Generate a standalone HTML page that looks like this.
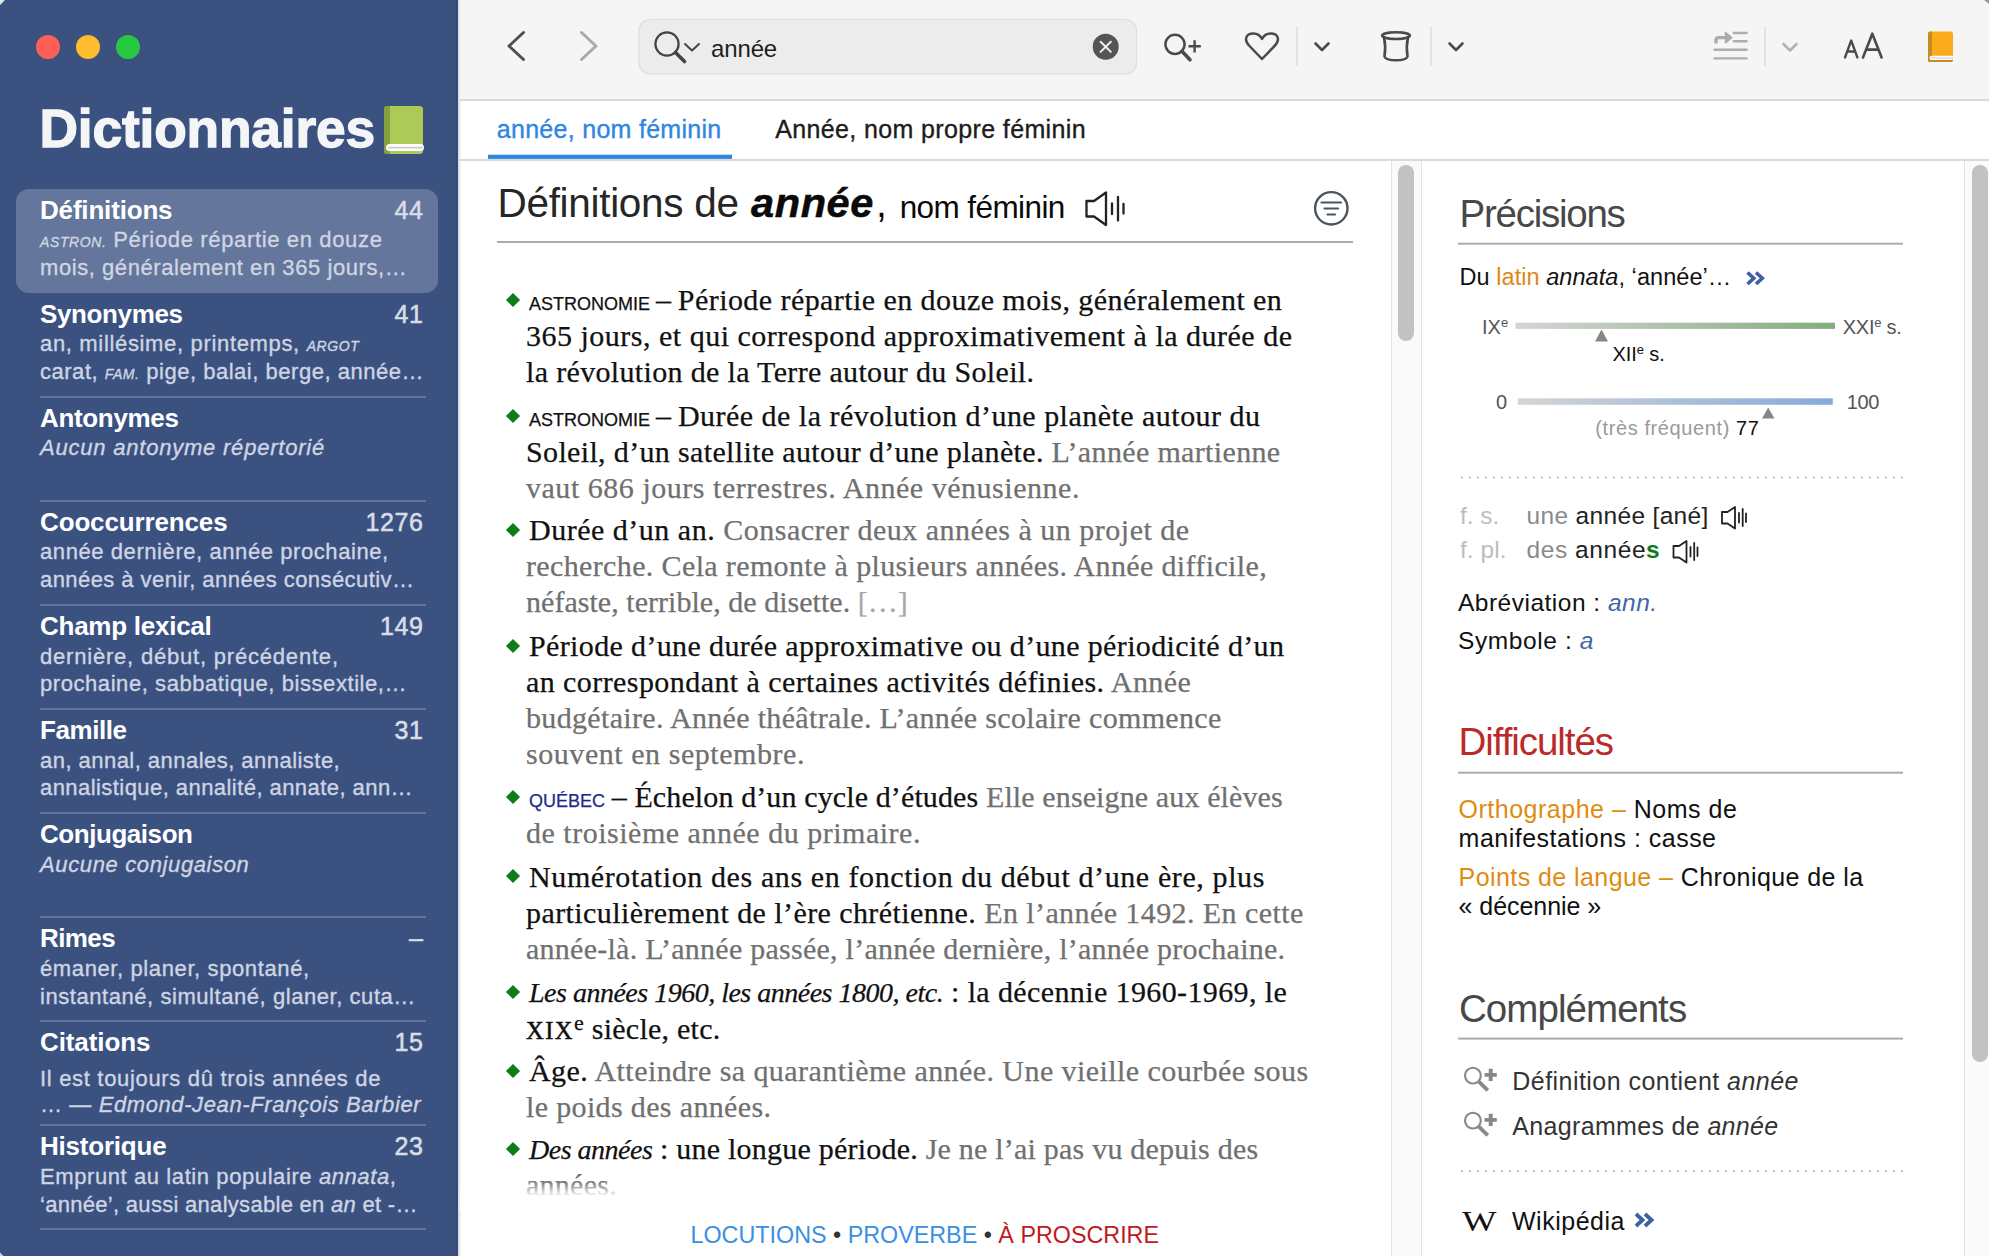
<!DOCTYPE html>
<html><head><meta charset="utf-8">
<style>
*{margin:0;padding:0;box-sizing:border-box}
html,body{width:1989px;height:1256px;overflow:hidden;background:#fff;font-family:"Liberation Sans",sans-serif;position:relative}
.abs{position:absolute}
.r{position:absolute;white-space:nowrap}
svg{position:absolute;overflow:visible}
.sc{font-style:italic;font-size:14px;letter-spacing:0.6px}
.g{color:#707070}
.lg{color:#a8a8a8}
.dom{font-family:"Liberation Sans",sans-serif;font-size:18px;line-height:0;letter-spacing:0!important}
.qc{color:#1f2a8a}
.rom{font-size:24.5px;letter-spacing:1.5px;line-height:0;-webkit-text-stroke:0.5px currentColor}
sup{font-size:22px;line-height:0;vertical-align:9px}
.dia{position:absolute;width:10px;height:10px;background:#0d7d17;transform:rotate(45deg)}
.med{-webkit-text-stroke:0.35px currentColor}
.it{font-size:28px;letter-spacing:-0.5px!important}
</style></head><body>

<div class="abs" style="left:0;top:0;width:458px;height:1256px;background:#3b5281"></div>
<div class="abs" style="left:456px;top:0;width:2px;height:1256px;background:#374b7b"></div>
<div class="abs" style="left:458px;top:0;width:3px;height:1256px;background:linear-gradient(to right,#dcdcdc,#e9e9e9 60%,#f6f6f6)"></div>
<div class="abs" style="left:36px;top:35px;width:24px;height:24px;border-radius:50%;background:#fe5f57"></div>
<div class="abs" style="left:76px;top:35px;width:24px;height:24px;border-radius:50%;background:#febc2e"></div>
<div class="abs" style="left:116px;top:35px;width:24px;height:24px;border-radius:50%;background:#28c840"></div>
<div class="abs" style="left:16px;top:189px;width:422px;height:104px;border-radius:13px;background:#64769b"></div>
<div class="abs" style="left:40px;top:395.7px;width:386px;height:2px;background:#6074a0"></div>
<div class="abs" style="left:40px;top:499.7px;width:386px;height:2px;background:#6074a0"></div>
<div class="abs" style="left:40px;top:603.8px;width:386px;height:2px;background:#6074a0"></div>
<div class="abs" style="left:40px;top:707.9px;width:386px;height:2px;background:#6074a0"></div>
<div class="abs" style="left:40px;top:812.0px;width:386px;height:2px;background:#6074a0"></div>
<div class="abs" style="left:40px;top:916.1px;width:386px;height:2px;background:#6074a0"></div>
<div class="abs" style="left:40px;top:1020.1px;width:386px;height:2px;background:#6074a0"></div>
<div class="abs" style="left:40px;top:1124.2px;width:386px;height:2px;background:#6074a0"></div>
<div class="abs" style="left:40px;top:1228.3px;width:386px;height:2px;background:#6074a0"></div>

<svg style="left:0;top:0" width="460" height="200">
 <rect x="384" y="106" width="39" height="48" rx="3.5" fill="#adc957"/>
 <path d="M387.5,106 L390,106 L390,154 L387.5,154 A3.5,3.5 0 0 1 384,150.5 L384,109.5 A3.5,3.5 0 0 1 387.5,106 Z" fill="#84a03f"/>
 <rect x="386" y="144" width="38" height="7" rx="3.5" fill="#ffffff"/>
 <rect x="388" y="146.7" width="35" height="1.8" fill="#cdcdcd"/>
</svg>
<div class="abs" style="left:460px;top:0;width:1529px;height:100px;background:#f5f5f5"></div>
<div class="abs" style="left:460px;top:99px;width:1529px;height:1.5px;background:#d9d9d9"></div>
<div class="abs" style="left:460px;top:159px;width:1529px;height:1.6px;background:#dadada"></div>
<!-- content scrollbar -->
<div class="abs" style="left:1390.5px;top:161px;width:31px;height:1095px;background:#fafafa;border-left:1.5px solid #e3e3e3;border-right:1.5px solid #e3e3e3"></div>
<div class="abs" style="left:1398px;top:165px;width:16px;height:176px;border-radius:8px;background:#c2c2c2"></div>
<!-- right scrollbar -->
<div class="abs" style="left:1963.5px;top:161px;width:26px;height:1095px;background:#fafafa;border-left:1.5px solid #e3e3e3"></div>
<div class="abs" style="left:1972px;top:165px;width:16px;height:897px;border-radius:8px;background:#c2c2c2"></div>

<svg style="left:0;top:0" width="1989" height="1256" viewBox="0 0 1989 1256">
 <g fill="none" stroke-linecap="round" stroke-linejoin="round">
  <path d="M523.5,32.5 L509,46 L523.5,59.5" stroke="#4f4f4f" stroke-width="3"/>
  <path d="M581.5,32.5 L596,46 L581.5,59.5" stroke="#a9a9a9" stroke-width="3"/>
  <rect x="639" y="19.5" width="497.5" height="54.5" rx="11" fill="#ececec" stroke="#dedede" stroke-width="1.2"/>
  <circle cx="667" cy="44" r="11.6" stroke="#444" stroke-width="2.2"/>
  <path d="M675.5,52.5 L684.5,61.5" stroke="#444" stroke-width="3.6"/>
  <path d="M685,44 L692,50.5 L699,44" stroke="#444" stroke-width="2"/>
  <circle cx="1105.7" cy="46.8" r="13" fill="#555" stroke="none"/>
  <path d="M1100.6,41.7 L1110.8,51.9 M1110.8,41.7 L1100.6,51.9" stroke="#f0f0f0" stroke-width="2"/>
  <circle cx="1175" cy="44.3" r="9.6" stroke="#4a4a4a" stroke-width="2.5"/>
  <path d="M1182,51.3 L1190,59.8" stroke="#4a4a4a" stroke-width="3.6"/>
  <path d="M1188.5,46.3 L1200.8,46.3 M1194.6,40.2 L1194.6,52.4" stroke="#4a4a4a" stroke-width="2.4" stroke-linecap="butt"/>
  <path d="M1262,59 L1249.5,46 C1244,40.5 1245,33.5 1253.5,33.5 C1257.5,33.5 1260.5,36 1262,39 C1263.5,36 1266.5,33.5 1270.5,33.5 C1279,33.5 1280,40.5 1274.5,46 Z" stroke="#4a4a4a" stroke-width="2.5"/>
  <path d="M1297,27.5 L1297,65.5" stroke="#dadada" stroke-width="1.4"/>
  <path d="M1315.5,43.5 L1322,50 L1328.5,43.5" stroke="#4a4a4a" stroke-width="2.6"/>
  <ellipse cx="1396" cy="35.6" rx="13.8" ry="3.4" stroke="#4a4a4a" stroke-width="2.6"/>
  <path d="M1384,37 C1385.5,44 1385.5,50 1384.5,56.5 C1386,61.5 1406,61.5 1407.5,56.5 C1406.5,50 1406.5,44 1408,37" stroke="#4a4a4a" stroke-width="2.6"/>
  <path d="M1431,27.5 L1431,65.5" stroke="#dadada" stroke-width="1.4"/>
  <path d="M1449.5,43.5 L1456,50 L1462.5,43.5" stroke="#4a4a4a" stroke-width="2.6"/>
  <path d="M1733.8,33 L1746.6,33 M1733.8,41.3 L1746.6,41.3 M1714.5,49.8 L1746.6,49.8 M1714.5,58.4 L1746.6,58.4" stroke="#adadad" stroke-width="2.4"/>
  <path d="M1716,43.5 L1716,40 C1716,38.5 1717,37.6 1718.5,37.6 L1726,37.6" stroke="#adadad" stroke-width="3.4" stroke-linecap="butt"/>
  <path d="M1725.5,32.5 L1731.8,37.6 L1725.5,42.8 Z" fill="#adadad" stroke="#adadad" stroke-width="1.5"/>
  <path d="M1765,27.5 L1765,65.5" stroke="#dadada" stroke-width="1.4"/>
  <path d="M1783.5,44 L1790,50.5 L1796.5,44" stroke="#b3b3b3" stroke-width="2.6"/>
  <path d="M1845,57.5 L1851.2,40.5 L1857.4,57.5 M1847.3,51.5 L1855.1,51.5" stroke="#4a4a4a" stroke-width="2.3"/>
  <path d="M1863,57.5 L1872.3,33.7 L1881.6,57.5 M1866.6,49.6 L1878,49.6" stroke="#4a4a4a" stroke-width="2.6"/>
 </g>
 <rect x="1928" y="31.5" width="25" height="30.5" rx="2.5" fill="#fbab1c"/>
 <path d="M1930.5,31.5 L1932,31.5 L1932,62 L1930.5,62 A2.5,2.5 0 0 1 1928,59.5 L1928,34 A2.5,2.5 0 0 1 1930.5,31.5 Z" fill="#c98a1f"/>
 <rect x="1928" y="58" width="25" height="4" rx="2" fill="#c98a1f"/>
 <rect x="1929.5" y="55.8" width="24" height="4.3" rx="2.1" fill="#ffffff"/>
 <rect x="1931" y="57.2" width="22" height="1.5" fill="#d8dbe0"/>
 <rect x="488" y="154.7" width="244" height="4.2" fill="#2b87e3"/>
 <!-- content heading line -->
 <rect x="497" y="241" width="856" height="2" fill="#ababab"/>
 <!-- speaker heading -->
 <g fill="none" stroke="#222" stroke-width="2.3" stroke-linejoin="round" stroke-linecap="round">
  <path d="M1086.5,201 L1094,201 L1106,192.5 L1106,225 L1094,216.5 L1086.5,216.5 Z"/>
  <path d="M1112,203.5 L1112,214 M1118,197 L1118,220.5 M1123.5,204 L1123.5,213.5"/>
 </g>
 <!-- filter icon -->
 <circle cx="1331.3" cy="208.3" r="16.2" fill="none" stroke="#4b5560" stroke-width="2.4"/>
 <path d="M1321.5,202.5 L1341,202.5 M1324.5,208.5 L1338,208.5 M1327.5,214.5 L1335,214.5" stroke="#4b5560" stroke-width="2.2" stroke-linecap="round"/>
</svg>
<div class="r" id="r0" style="left:39.5px;top:94.03px;font-family:'Liberation Sans',sans-serif;font-size:53.3px;line-height:69px;color:#f4f5f7;letter-spacing:-0.165px;font-weight:bold;-webkit-text-stroke:1.3px #f4f5f7"><span>Dictionnaires</span></div>
<div class="r" id="r1" style="left:40px;top:192.69px;font-family:'Liberation Sans',sans-serif;font-size:26px;line-height:34px;color:#ffffff;letter-spacing:-0.176px;font-weight:bold"><span>Définitions</span></div>
<div class="r" id="r2" style="left:40px;top:225.18px;font-family:'Liberation Sans',sans-serif;font-size:22px;line-height:29px;color:#cfd5e2;letter-spacing:0.646px;-webkit-text-stroke:0.35px #cfd5e2"><span><span class="sc">ASTRON.</span> Période répartie en douze</span></div>
<div class="r" id="r3" style="left:40px;top:252.98px;font-family:'Liberation Sans',sans-serif;font-size:22px;line-height:29px;color:#cfd5e2;letter-spacing:0.566px;-webkit-text-stroke:0.35px #cfd5e2"><span>mois, généralement en 365 jours,…</span></div>
<div class="r" id="r4" style="left:40px;top:296.77px;font-family:'Liberation Sans',sans-serif;font-size:26px;line-height:34px;color:#ffffff;letter-spacing:-0.372px;font-weight:bold"><span>Synonymes</span></div>
<div class="r" id="r5" style="left:40px;top:329.26px;font-family:'Liberation Sans',sans-serif;font-size:22px;line-height:29px;color:#cfd5e2;letter-spacing:0.663px;-webkit-text-stroke:0.35px #cfd5e2"><span>an, millésime, printemps, <span class="sc">ARGOT</span></span></div>
<div class="r" id="r6" style="left:40px;top:357.06px;font-family:'Liberation Sans',sans-serif;font-size:22px;line-height:29px;color:#cfd5e2;letter-spacing:0.521px;-webkit-text-stroke:0.35px #cfd5e2"><span>carat, <span class="sc">FAM.</span> pige, balai, berge, année…</span></div>
<div class="r" id="r7" style="left:40px;top:400.85px;font-family:'Liberation Sans',sans-serif;font-size:26px;line-height:34px;color:#ffffff;letter-spacing:-0.332px;font-weight:bold"><span>Antonymes</span></div>
<div class="r" id="r8" style="left:40px;top:433.34px;font-family:'Liberation Sans',sans-serif;font-size:22px;line-height:29px;color:#cfd5e2;letter-spacing:0.785px;-webkit-text-stroke:0.35px #cfd5e2"><span><i>Aucun antonyme répertorié</i></span></div>
<div class="r" id="r9" style="left:40px;top:504.93px;font-family:'Liberation Sans',sans-serif;font-size:26px;line-height:34px;color:#ffffff;letter-spacing:-0.139px;font-weight:bold"><span>Cooccurrences</span></div>
<div class="r" id="r10" style="left:40px;top:537.42px;font-family:'Liberation Sans',sans-serif;font-size:22px;line-height:29px;color:#cfd5e2;letter-spacing:0.579px;-webkit-text-stroke:0.35px #cfd5e2"><span>année dernière, année prochaine,</span></div>
<div class="r" id="r11" style="left:40px;top:565.22px;font-family:'Liberation Sans',sans-serif;font-size:22px;line-height:29px;color:#cfd5e2;letter-spacing:0.439px;-webkit-text-stroke:0.35px #cfd5e2"><span>années à venir, années consécutiv…</span></div>
<div class="r" id="r12" style="left:40px;top:609.01px;font-family:'Liberation Sans',sans-serif;font-size:26px;line-height:34px;color:#ffffff;letter-spacing:-0.258px;font-weight:bold"><span>Champ lexical</span></div>
<div class="r" id="r13" style="left:40px;top:641.50px;font-family:'Liberation Sans',sans-serif;font-size:22px;line-height:29px;color:#cfd5e2;letter-spacing:0.799px;-webkit-text-stroke:0.35px #cfd5e2"><span>dernière, début, précédente,</span></div>
<div class="r" id="r14" style="left:40px;top:669.30px;font-family:'Liberation Sans',sans-serif;font-size:22px;line-height:29px;color:#cfd5e2;letter-spacing:0.565px;-webkit-text-stroke:0.35px #cfd5e2"><span>prochaine, sabbatique, bissextile,…</span></div>
<div class="r" id="r15" style="left:40px;top:713.09px;font-family:'Liberation Sans',sans-serif;font-size:26px;line-height:34px;color:#ffffff;letter-spacing:-0.429px;font-weight:bold"><span>Famille</span></div>
<div class="r" id="r16" style="left:40px;top:745.58px;font-family:'Liberation Sans',sans-serif;font-size:22px;line-height:29px;color:#cfd5e2;letter-spacing:0.466px;-webkit-text-stroke:0.35px #cfd5e2"><span>an, annal, annales, annaliste,</span></div>
<div class="r" id="r17" style="left:40px;top:773.38px;font-family:'Liberation Sans',sans-serif;font-size:22px;line-height:29px;color:#cfd5e2;letter-spacing:0.440px;-webkit-text-stroke:0.35px #cfd5e2"><span>annalistique, annalité, annate, ann…</span></div>
<div class="r" id="r18" style="left:40px;top:817.17px;font-family:'Liberation Sans',sans-serif;font-size:26px;line-height:34px;color:#ffffff;letter-spacing:-0.449px;font-weight:bold"><span>Conjugaison</span></div>
<div class="r" id="r19" style="left:40px;top:849.66px;font-family:'Liberation Sans',sans-serif;font-size:22px;line-height:29px;color:#cfd5e2;letter-spacing:0.630px;-webkit-text-stroke:0.35px #cfd5e2"><span><i>Aucune conjugaison</i></span></div>
<div class="r" id="r20" style="left:40px;top:921.25px;font-family:'Liberation Sans',sans-serif;font-size:26px;line-height:34px;color:#ffffff;letter-spacing:-0.609px;font-weight:bold"><span>Rimes</span></div>
<div class="r" id="r21" style="left:40px;top:953.74px;font-family:'Liberation Sans',sans-serif;font-size:22px;line-height:29px;color:#cfd5e2;letter-spacing:0.612px;-webkit-text-stroke:0.35px #cfd5e2"><span>émaner, planer, spontané,</span></div>
<div class="r" id="r22" style="left:40px;top:981.54px;font-family:'Liberation Sans',sans-serif;font-size:22px;line-height:29px;color:#cfd5e2;letter-spacing:0.556px;-webkit-text-stroke:0.35px #cfd5e2"><span>instantané, simultané, glaner, cuta…</span></div>
<div class="r" id="r23" style="left:40px;top:1025.33px;font-family:'Liberation Sans',sans-serif;font-size:26px;line-height:34px;color:#ffffff;letter-spacing:-0.103px;font-weight:bold"><span>Citations</span></div>
<div class="r" id="r24" style="left:40px;top:1063.72px;font-family:'Liberation Sans',sans-serif;font-size:22px;line-height:29px;color:#cfd5e2;letter-spacing:0.681px;-webkit-text-stroke:0.35px #cfd5e2"><span>Il est toujours dû trois années de</span></div>
<div class="r" id="r25" style="left:40px;top:1089.52px;font-family:'Liberation Sans',sans-serif;font-size:22px;line-height:29px;color:#cfd5e2;letter-spacing:0.602px;-webkit-text-stroke:0.35px #cfd5e2"><span>… — <i>Edmond-Jean-François Barbier</i></span></div>
<div class="r" id="r26" style="left:40px;top:1129.41px;font-family:'Liberation Sans',sans-serif;font-size:26px;line-height:34px;color:#ffffff;letter-spacing:-0.217px;font-weight:bold"><span>Historique</span></div>
<div class="r" id="r27" style="left:40px;top:1161.90px;font-family:'Liberation Sans',sans-serif;font-size:22px;line-height:29px;color:#cfd5e2;letter-spacing:0.590px;-webkit-text-stroke:0.35px #cfd5e2"><span>Emprunt au latin populaire <i>annata</i>,</span></div>
<div class="r" id="r28" style="left:40px;top:1189.70px;font-family:'Liberation Sans',sans-serif;font-size:22px;line-height:29px;color:#cfd5e2;letter-spacing:0.294px;-webkit-text-stroke:0.35px #cfd5e2"><span>‘année’, aussi analysable en <i>an</i> et -…</span></div>
<div class="r" id="r29" style="left:711px;top:32.68px;font-family:'Liberation Sans',sans-serif;font-size:24px;line-height:31px;color:#1e1e1e;letter-spacing:-0.129px;"><span>année</span></div>
<div class="r" id="r30" style="left:496.8px;top:112.64px;font-family:'Liberation Sans',sans-serif;font-size:25px;line-height:32px;color:#2d86e2;letter-spacing:0.284px;-webkit-text-stroke:0.35px #2d86e2"><span>année, nom féminin</span></div>
<div class="r" id="r31" style="left:775.2px;top:112.64px;font-family:'Liberation Sans',sans-serif;font-size:25px;line-height:32px;color:#1c1c1c;letter-spacing:0.370px;-webkit-text-stroke:0.35px #1c1c1c"><span>Année, nom propre féminin</span></div>
<div class="r" id="r32" style="left:497.5px;top:177.07px;font-family:'Liberation Sans',sans-serif;font-size:40.5px;line-height:53px;color:#262626;letter-spacing:-0.307px;"><span>Définitions de</span></div>
<div class="r" id="r33" style="left:751px;top:176.22px;font-family:'Liberation Sans',sans-serif;font-size:41.5px;line-height:54px;color:#0a0a0a;letter-spacing:0.609px;-webkit-text-stroke:0.5px #0a0a0a"><span><b><i>année</i></b></span></div>
<div class="r" id="r34" style="left:876px;top:178.39px;font-family:'Liberation Sans',sans-serif;font-size:39px;line-height:51px;color:#0a0a0a;"><span>,</span></div>
<div class="r" id="r35" style="left:899.7px;top:187.19px;font-family:'Liberation Sans',sans-serif;font-size:31.5px;line-height:41px;color:#0a0a0a;letter-spacing:-0.590px;"><span>nom féminin</span></div>
<div class="r" id="r36" style="left:529px;top:279.98px;font-family:'Liberation Serif',serif;font-size:30px;line-height:39px;color:#111;letter-spacing:0.437px;-webkit-text-stroke:0.25px currentColor"><span><span class="dom">ASTRONOMIE</span> <span style="margin-left:-2px;margin-right:-1.5px">–</span> Période répartie en douze mois, généralement en</span></div>
<div class="r" id="r37" style="left:526px;top:316.18px;font-family:'Liberation Serif',serif;font-size:30px;line-height:39px;color:#111;letter-spacing:0.501px;-webkit-text-stroke:0.25px currentColor"><span>365 jours, et qui correspond approximativement à la durée de</span></div>
<div class="r" id="r38" style="left:526px;top:352.38px;font-family:'Liberation Serif',serif;font-size:30px;line-height:39px;color:#111;letter-spacing:0.336px;-webkit-text-stroke:0.25px currentColor"><span>la révolution de la Terre autour du Soleil.</span></div>
<div class="r" id="r39" style="left:529px;top:395.77px;font-family:'Liberation Serif',serif;font-size:30px;line-height:39px;color:#111;letter-spacing:0.476px;-webkit-text-stroke:0.25px currentColor"><span><span class="dom">ASTRONOMIE</span> <span style="margin-left:-2px;margin-right:-1.5px">–</span> Durée de la révolution d’une planète autour du</span></div>
<div class="r" id="r40" style="left:526px;top:431.97px;font-family:'Liberation Serif',serif;font-size:30px;line-height:39px;color:#111;letter-spacing:0.350px;-webkit-text-stroke:0.25px currentColor"><span>Soleil, d’un satellite autour d’une planète. <span class="g">L’année martienne</span></span></div>
<div class="r" id="r41" style="left:526px;top:468.17px;font-family:'Liberation Serif',serif;font-size:30px;line-height:39px;color:#111;letter-spacing:0.529px;-webkit-text-stroke:0.25px currentColor"><span><span class="g">vaut 686 jours terrestres. Année vénusienne.</span></span></div>
<div class="r" id="r42" style="left:529px;top:509.98px;font-family:'Liberation Serif',serif;font-size:30px;line-height:39px;color:#111;letter-spacing:0.508px;-webkit-text-stroke:0.25px currentColor"><span>Durée d’un an. <span class="g">Consacrer deux années à un projet de</span></span></div>
<div class="r" id="r43" style="left:526px;top:546.18px;font-family:'Liberation Serif',serif;font-size:30px;line-height:39px;color:#111;letter-spacing:0.365px;-webkit-text-stroke:0.25px currentColor"><span><span class="g">recherche. Cela remonte à plusieurs années. Année difficile,</span></span></div>
<div class="r" id="r44" style="left:526px;top:582.38px;font-family:'Liberation Serif',serif;font-size:30px;line-height:39px;color:#111;letter-spacing:0.035px;-webkit-text-stroke:0.25px currentColor"><span><span class="g">néfaste, terrible, de disette. <span class="lg">[…]</span></span></span></div>
<div class="r" id="r45" style="left:529px;top:625.77px;font-family:'Liberation Serif',serif;font-size:30px;line-height:39px;color:#111;letter-spacing:0.363px;-webkit-text-stroke:0.25px currentColor"><span>Période d’une durée approximative ou d’une périodicité d’un</span></div>
<div class="r" id="r46" style="left:526px;top:661.98px;font-family:'Liberation Serif',serif;font-size:30px;line-height:39px;color:#111;letter-spacing:0.426px;-webkit-text-stroke:0.25px currentColor"><span>an correspondant à certaines activités définies. <span class="g">Année</span></span></div>
<div class="r" id="r47" style="left:526px;top:698.17px;font-family:'Liberation Serif',serif;font-size:30px;line-height:39px;color:#111;letter-spacing:0.331px;-webkit-text-stroke:0.25px currentColor"><span><span class="g">budgétaire. Année théâtrale. L’année scolaire commence</span></span></div>
<div class="r" id="r48" style="left:526px;top:734.38px;font-family:'Liberation Serif',serif;font-size:30px;line-height:39px;color:#111;letter-spacing:0.551px;-webkit-text-stroke:0.25px currentColor"><span><span class="g">souvent en septembre.</span></span></div>
<div class="r" id="r49" style="left:529px;top:776.88px;font-family:'Liberation Serif',serif;font-size:30px;line-height:39px;color:#111;letter-spacing:0.119px;-webkit-text-stroke:0.25px currentColor"><span><span class="dom qc">QUÉBEC</span> <span style="margin-left:-1px;margin-right:0px">–</span> Échelon d’un cycle d’études <span class="g">Elle enseigne aux élèves</span></span></div>
<div class="r" id="r50" style="left:526px;top:813.08px;font-family:'Liberation Serif',serif;font-size:30px;line-height:39px;color:#111;letter-spacing:0.513px;-webkit-text-stroke:0.25px currentColor"><span><span class="g">de troisième année du primaire.</span></span></div>
<div class="r" id="r51" style="left:529px;top:856.58px;font-family:'Liberation Serif',serif;font-size:30px;line-height:39px;color:#111;letter-spacing:0.605px;-webkit-text-stroke:0.25px currentColor"><span>Numérotation des ans en fonction du début d’une ère, plus</span></div>
<div class="r" id="r52" style="left:526px;top:892.78px;font-family:'Liberation Serif',serif;font-size:30px;line-height:39px;color:#111;letter-spacing:0.418px;-webkit-text-stroke:0.25px currentColor"><span>particulièrement de l’ère chrétienne. <span class="g">En l’année 1492. En cette</span></span></div>
<div class="r" id="r53" style="left:526px;top:928.98px;font-family:'Liberation Serif',serif;font-size:30px;line-height:39px;color:#111;letter-spacing:0.256px;-webkit-text-stroke:0.25px currentColor"><span><span class="g">année-là. L’année passée, l’année dernière, l’année prochaine.</span></span></div>
<div class="r" id="r54" style="left:529px;top:972.38px;font-family:'Liberation Serif',serif;font-size:30px;line-height:39px;color:#111;letter-spacing:0.385px;-webkit-text-stroke:0.25px currentColor"><span><i class="it">Les années 1960, les années 1800, etc.</i> : la décennie 1960-1969, le</span></div>
<div class="r" id="r55" style="left:526px;top:1008.58px;font-family:'Liberation Serif',serif;font-size:30px;line-height:39px;color:#111;letter-spacing:0.243px;-webkit-text-stroke:0.25px currentColor"><span><span class="rom">XIX</span><sup>e</sup> siècle, etc.</span></div>
<div class="r" id="r56" style="left:529px;top:1051.08px;font-family:'Liberation Serif',serif;font-size:30px;line-height:39px;color:#111;letter-spacing:0.434px;-webkit-text-stroke:0.25px currentColor"><span>Âge. <span class="g">Atteindre sa quarantième année. Une vieille courbée sous</span></span></div>
<div class="r" id="r57" style="left:526px;top:1087.28px;font-family:'Liberation Serif',serif;font-size:30px;line-height:39px;color:#111;letter-spacing:0.351px;-webkit-text-stroke:0.25px currentColor"><span><span class="g">le poids des années.</span></span></div>
<div class="r" id="r58" style="left:529px;top:1129.28px;font-family:'Liberation Serif',serif;font-size:30px;line-height:39px;color:#111;letter-spacing:0.220px;-webkit-text-stroke:0.25px currentColor"><span><i class="it">Des années</i> : une longue période. <span class="g">Je ne l’ai pas vu depuis des</span></span></div>
<div class="r" id="r59" style="left:526px;top:1165.48px;font-family:'Liberation Serif',serif;font-size:30px;line-height:39px;color:#111;letter-spacing:0.253px;-webkit-text-stroke:0.25px currentColor"><span><span class="g">années.</span></span></div>
<div class="r" id="r60" style="left:690.5px;top:1220.23px;font-family:'Liberation Sans',sans-serif;font-size:23.3px;line-height:30px;color:#3a8fe1;letter-spacing:0.011px;"><span>LOCUTIONS <span style="color:#333">•</span> PROVERBE <span style="color:#333">•</span> <span style="color:#c0191e">À PROSCRIRE</span></span></div>
<div class="r" id="r61" style="left:1459.5px;top:188.66px;font-family:'Liberation Sans',sans-serif;font-size:38.5px;line-height:50px;color:#484848;letter-spacing:-1.250px;"><span>Précisions</span></div>
<div class="r" id="r62" style="left:1459.5px;top:262.26px;font-family:'Liberation Sans',sans-serif;font-size:23.5px;line-height:31px;color:#111;letter-spacing:0.056px;"><span>Du <span style="color:#dc8a14">latin</span> <i>annata</i>, ‘année’…</span></div>
<div class="r" id="r63" style="left:1482px;top:313.57px;font-family:'Liberation Sans',sans-serif;font-size:20px;line-height:26px;color:#555;"><span>IX<sup class="s2">e</sup></span></div>
<div class="r" id="r64" style="left:1842.7px;top:313.57px;font-family:'Liberation Sans',sans-serif;font-size:20px;line-height:26px;color:#555;letter-spacing:-0.228px;"><span>XXI<sup class="s2">e</sup> s.</span></div>
<div class="r" id="r65" style="left:1612.6px;top:340.67px;font-family:'Liberation Sans',sans-serif;font-size:20px;line-height:26px;color:#111;letter-spacing:-0.103px;"><span>XII<sup class="s2">e</sup> s.</span></div>
<div class="r" id="r66" style="left:1496px;top:388.77px;font-family:'Liberation Sans',sans-serif;font-size:20px;line-height:26px;color:#555;"><span>0</span></div>
<div class="r" id="r67" style="left:1846.7px;top:388.77px;font-family:'Liberation Sans',sans-serif;font-size:20px;line-height:26px;color:#555;letter-spacing:-0.357px;"><span>100</span></div>
<div class="r" id="r68" style="left:1595.3px;top:415.37px;font-family:'Liberation Sans',sans-serif;font-size:20px;line-height:26px;color:#9a9a9a;letter-spacing:0.599px;"><span>(très fréquent) <span style="color:#111">77</span></span></div>
<div class="r" id="r69" style="left:1460px;top:500.31px;font-family:'Liberation Sans',sans-serif;font-size:24.5px;line-height:32px;color:#bdbdbd;letter-spacing:-0.036px;"><span>f. s.</span></div>
<div class="r" id="r70" style="left:1526.5px;top:500.31px;font-family:'Liberation Sans',sans-serif;font-size:24.5px;line-height:32px;color:#222;letter-spacing:0.338px;"><span><span style="color:#8a8a8a">une</span> année [ané]</span></div>
<div class="r" id="r71" style="left:1460px;top:534.01px;font-family:'Liberation Sans',sans-serif;font-size:24.5px;line-height:32px;color:#bdbdbd;letter-spacing:0.067px;"><span>f. pl.</span></div>
<div class="r" id="r72" style="left:1526.5px;top:534.01px;font-family:'Liberation Sans',sans-serif;font-size:24.5px;line-height:32px;color:#222;letter-spacing:0.571px;"><span><span style="color:#8a8a8a">des</span> année<b style="color:#127a17">s</b></span></div>
<div class="r" id="r73" style="left:1458px;top:586.81px;font-family:'Liberation Sans',sans-serif;font-size:24.5px;line-height:32px;color:#111;letter-spacing:0.495px;"><span>Abréviation : <i style="color:#4466a8">ann.</i></span></div>
<div class="r" id="r74" style="left:1458px;top:624.71px;font-family:'Liberation Sans',sans-serif;font-size:24.5px;line-height:32px;color:#111;letter-spacing:0.601px;"><span>Symbole : <i style="color:#4466a8">a</i></span></div>
<div class="r" id="r75" style="left:1458.6px;top:717.36px;font-family:'Liberation Sans',sans-serif;font-size:38.5px;line-height:50px;color:#bb2a2a;letter-spacing:-1.071px;"><span>Difficultés</span></div>
<div class="r" id="r76" style="left:1458.6px;top:793.04px;font-family:'Liberation Sans',sans-serif;font-size:25px;line-height:32px;color:#111;letter-spacing:0.500px;"><span><span style="color:#de8c12">Orthographe –</span> Noms de</span></div>
<div class="r" id="r77" style="left:1458.6px;top:822.44px;font-family:'Liberation Sans',sans-serif;font-size:25px;line-height:32px;color:#111;letter-spacing:0.480px;"><span>manifestations : casse</span></div>
<div class="r" id="r78" style="left:1458.6px;top:860.94px;font-family:'Liberation Sans',sans-serif;font-size:25px;line-height:32px;color:#111;letter-spacing:0.424px;"><span><span style="color:#de8c12">Points de langue –</span> Chronique de la</span></div>
<div class="r" id="r79" style="left:1458.6px;top:890.34px;font-family:'Liberation Sans',sans-serif;font-size:25px;line-height:32px;color:#111;letter-spacing:-0.057px;"><span>« décennie »</span></div>
<div class="r" id="r80" style="left:1459px;top:983.66px;font-family:'Liberation Sans',sans-serif;font-size:38.5px;line-height:50px;color:#484848;letter-spacing:-0.937px;"><span>Compléments</span></div>
<div class="r" id="r81" style="left:1512.3px;top:1065.34px;font-family:'Liberation Sans',sans-serif;font-size:25px;line-height:32px;color:#333;letter-spacing:0.456px;"><span>Définition contient <i>année</i></span></div>
<div class="r" id="r82" style="left:1512.3px;top:1109.74px;font-family:'Liberation Sans',sans-serif;font-size:25px;line-height:32px;color:#333;letter-spacing:0.336px;"><span>Anagrammes de <i>année</i></span></div>
<div class="r" id="r83" style="left:1512px;top:1204.64px;font-family:'Liberation Sans',sans-serif;font-size:25px;line-height:32px;color:#111;letter-spacing:0.514px;"><span>Wikipédia</span></div><svg style="left:0;top:0" width="1989" height="1256">
<path d="M0,0 L5,0 L0,5 Z" fill="#e6e6e6"/><path d="M0,1256 L3.5,1256 L0,1252.5 Z" fill="#d0d0d0"/><path d="M1989,0 L1984,0 L1989,4 Z" fill="#999"/>
</svg>
<div class="r" style="right:1565.5px;top:194.54px;font-size:25px;line-height:31px;color:#d8dde7;text-align:right;-webkit-text-stroke:0.55px #d8dde7;letter-spacing:0.6px">44</div>
<div class="r" style="right:1565.5px;top:298.62px;font-size:25px;line-height:31px;color:#d8dde7;text-align:right;-webkit-text-stroke:0.55px #d8dde7;letter-spacing:0.6px">41</div>
<div class="r" style="right:1565.5px;top:506.78px;font-size:25px;line-height:31px;color:#d8dde7;text-align:right;-webkit-text-stroke:0.55px #d8dde7;letter-spacing:0.6px">1276</div>
<div class="r" style="right:1565.5px;top:610.86px;font-size:25px;line-height:31px;color:#d8dde7;text-align:right;-webkit-text-stroke:0.55px #d8dde7;letter-spacing:0.6px">149</div>
<div class="r" style="right:1565.5px;top:714.94px;font-size:25px;line-height:31px;color:#d8dde7;text-align:right;-webkit-text-stroke:0.55px #d8dde7;letter-spacing:0.6px">31</div>
<div class="r" style="right:1565.5px;top:923.10px;font-size:25px;line-height:31px;color:#d8dde7;text-align:right;-webkit-text-stroke:0.55px #d8dde7;letter-spacing:0.6px">–</div>
<div class="r" style="right:1565.5px;top:1027.18px;font-size:25px;line-height:31px;color:#d8dde7;text-align:right;-webkit-text-stroke:0.55px #d8dde7;letter-spacing:0.6px">15</div>
<div class="r" style="right:1565.5px;top:1131.26px;font-size:25px;line-height:31px;color:#d8dde7;text-align:right;-webkit-text-stroke:0.55px #d8dde7;letter-spacing:0.6px">23</div>
<div class="dia" style="left:508px;top:294.8px"></div>
<div class="dia" style="left:508px;top:410.6px"></div>
<div class="dia" style="left:508px;top:524.8px"></div>
<div class="dia" style="left:508px;top:640.6px"></div>
<div class="dia" style="left:508px;top:791.7px"></div>
<div class="dia" style="left:508px;top:871.4px"></div>
<div class="dia" style="left:508px;top:987.2px"></div>
<div class="dia" style="left:508px;top:1065.9px"></div>
<div class="dia" style="left:508px;top:1144.1px"></div>

<div class="abs" style="left:460px;top:1181px;width:930px;height:30px;background:linear-gradient(to bottom,rgba(255,255,255,0),rgba(255,255,255,0.6) 9px,#fff 16px)"></div>
<style>.s2{font-size:13px;vertical-align:7px}</style>
<svg style="left:0;top:0" width="1989" height="1256" viewBox="0 0 1989 1256">
 <defs>
  <linearGradient id="gg" x1="0" x2="1"><stop offset="0" stop-color="#d5d5d5"/><stop offset="1" stop-color="#83ad7d"/></linearGradient>
  <linearGradient id="gb" x1="0" x2="1"><stop offset="0" stop-color="#d5d5d5"/><stop offset="1" stop-color="#85aadb"/></linearGradient>
 </defs>
 <rect x="1458" y="242.7" width="445" height="2" fill="#ababab"/>
 <path d="M1747.5,272.5 L1753.8,278.3 L1747.5,284 M1756,272.5 L1762.3,278.3 L1756,284" fill="none" stroke="#3d5fa6" stroke-width="3.6" stroke-linecap="butt" stroke-linejoin="miter"/>
 <rect x="1515.5" y="322.7" width="319.5" height="6.2" fill="url(#gg)"/>
 <path d="M1601.5,329.5 L1608,341.5 L1595,341.5 Z" fill="#878787"/>
 <rect x="1517.8" y="398.3" width="315" height="6.5" fill="url(#gb)"/>
 <path d="M1768.2,407.5 L1774.5,418.5 L1762,418.5 Z" fill="#878787"/>
 <line x1="1461" y1="477.6" x2="1903" y2="477.6" stroke="#bdbdbd" stroke-width="2" stroke-dasharray="2 6"/>
 <g fill="none" stroke="#222" stroke-width="1.8" stroke-linejoin="round" stroke-linecap="round">
  <path d="M1722,512 L1727.5,512 L1735,507 L1735,528.5 L1727.5,523.5 L1722,523.5 Z"/>
  <path d="M1739,513 L1739,522.5 M1742.7,509 L1742.7,526 M1746,513.5 L1746,522"/>
  <path d="M1673.5,546 L1679,546 L1686.5,541 L1686.5,562.5 L1679,557.5 L1673.5,557.5 Z"/>
  <path d="M1690.5,547 L1690.5,556.5 M1694.2,543 L1694.2,560 M1697.5,547.5 L1697.5,556"/>
 </g>
 <rect x="1458" y="771.7" width="445" height="2" fill="#ababab"/>
 <rect x="1458" y="1037.6" width="445" height="2" fill="#ababab"/>
 <g fill="none" stroke="#86888a">
  <circle cx="1472.9" cy="1075.6" r="7.9" stroke-width="2.1"/>
  <path d="M1478.6,1081.3 L1487.8,1090.3" stroke-width="3.8"/>
  <path d="M1484.6,1074.9 L1496.8,1074.9 M1490.7,1068.8 L1490.7,1081" stroke-width="3.9"/>
  <circle cx="1472.9" cy="1120.6" r="7.9" stroke-width="2.1"/>
  <path d="M1478.6,1126.3 L1487.8,1135.3" stroke-width="3.8"/>
  <path d="M1484.6,1119.9 L1496.8,1119.9 M1490.7,1113.8 L1490.7,1126" stroke-width="3.9"/>
 </g>
 <line x1="1461" y1="1171.2" x2="1903" y2="1171.2" stroke="#bdbdbd" stroke-width="2" stroke-dasharray="2 6"/>
 <path d="M1636,1214 L1642.5,1220 L1636,1226 M1645,1214 L1651.5,1220 L1645,1226" fill="none" stroke="#3d5fa6" stroke-width="3.8" stroke-linecap="butt" stroke-linejoin="miter"/>
</svg>
<div class="r" style="left:1462px;top:1203px;font-family:'Liberation Serif',serif;font-size:30px;line-height:36px;color:#111;transform:scaleX(1.22);transform-origin:0 0">W</div>
</body></html>
